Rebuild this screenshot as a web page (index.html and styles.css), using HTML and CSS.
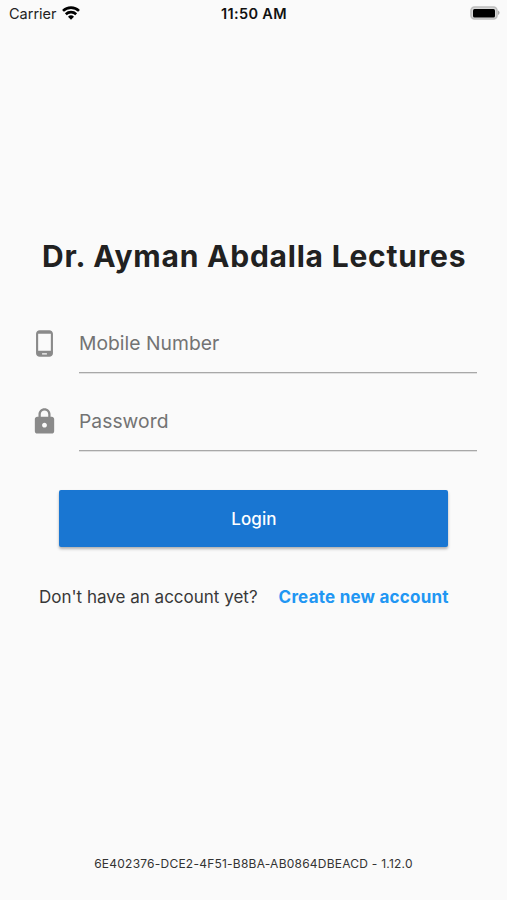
FILE: index.html
```html
<!DOCTYPE html>
<html lang="en">
<head>
<meta charset="utf-8">
<title>Dr. Ayman Abdalla Lectures</title>
<link rel="stylesheet" href="styles.css">
</head>
<body>
<header class="status">
  <div class="carrier"><span class="carrier-name">Carrier</span>
    <svg class="wifi" viewBox="0 0 18 14" width="18" height="14"><g fill="none" stroke="#000" stroke-width="2.6"><path d="M1 4.900a11.400 11.400 0 0 1 16 0"/><path d="M3.800 8.200a7.500 7.500 0 0 1 10.400 0"/></g><path d="M9 13.800 6 10.700a4.300 4.300 0 0 1 6 0z"/></svg>
  </div>
  <time class="clock">11:50 AM</time>
  <svg class="battery" viewBox="0 0 30 14" width="30" height="14"><rect x="1" y="1" width="26" height="12" rx="3.500" fill="#d8d8d8" stroke="#bdbdbd" stroke-width="1.600"/><rect x="3" y="3" width="22" height="8.500" rx="1.500"/><path d="M28 4.500q1.600.8 1.600 2.300T28 9z" fill="#aaa"/></svg>
</header>
<main class="login">
  <h1 class="title">Dr. Ayman Abdalla Lectures</h1>
  <form class="form">
    <label class="field"><svg class="icon" viewBox="0 0 24 24"><path d="M16 1H8C6.340 1 5 2.340 5 4v16c0 1.660 1.340 3 3 3h8c1.660 0 3-1.340 3-3V4c0-1.660-1.340-3-3-3zm-2 20h-4v-1h4v1zm3.250-3H6.750V4h10.500v14z"/></svg><span class="input"><span class="mobile">Mobile Number</span></span></label>
    <label class="field"><svg class="icon" viewBox="0 0 24 24"><path d="M18 8h-1V6c0-2.760-2.240-5-5-5S7 3.240 7 6v2H6c-1.100 0-2 .9-2 2v10c0 1.100.9 2 2 2h12c1.100 0 2-.9 2-2V10c0-1.100-.9-2-2-2zm-6 9c-1.100 0-2-.9-2-2s.9-2 2-2 2 .9 2 2-.9 2-2 2zm3.100-9H8.900V6c0-1.710 1.390-3.100 3.100-3.100s3.100 1.390 3.100 3.100v2z"/></svg><span class="input"><span class="password">Password</span></span></label>
    <button class="submit" type="button">Login</button>
  </form>
  <p class="signup"><span class="question">Don't have an account yet?</span><a class="create">Create new account</a></p>
</main>
<footer class="version"><span class="build">6E402376-DCE2-4F51-B8BA-AB0864DBEACD - 1.12.0</span></footer>
</body>
</html>
```
FILE: styles.css
```css
* { box-sizing: border-box; }
body { margin: 0; height: 900px; display: flex; flex-direction: column; background: #fafafa; color: #212121; font-family: Inter, sans-serif; overflow: hidden; white-space: nowrap; }
.status { height: 26px; padding: 0 7px 0 9px; display: grid; grid-template-columns: 1fr auto 1fr; align-items: center; color: #000; }
.carrier { display: flex; align-items: center; gap: 5px; font-size: 14.500px; color: #222; }
.clock { margin-right: 1px; font-size: 14.500px; font-weight: 600; letter-spacing: .35px; color: #111; }
.battery { justify-self: end; }
.login { padding: 210px 30px 0; }
.title { margin: 0 0 0 12px; height: 40px; font-size: 30px; line-height: 40px; font-weight: 650; letter-spacing: .78px; }
.form { display: flex; flex-direction: column; gap: 20px; margin-top: 39px; }
.field { display: flex; height: 58px; }
.icon { width: 29px; height: 29px; margin: 13.500px 20px 0 0; fill: #8a8a8a; }
.input { flex: 1; height: 58px; padding-top: 13px; border-bottom: 1px solid #a8a8a8; box-shadow: 0 1px 0 #e0e0e0; font-size: 19.300px; line-height: 30px; letter-spacing: .03px; color: #737373; }
.submit { width: 389px; height: 57px; margin: 19px 0 0 29.400px; border: 0; border-radius: 2px; background: #1976d2; color: #fff; font: 500 17px Inter, sans-serif; letter-spacing: .1px; box-shadow: 0 2px 3px rgba(0,0,0,.3); }
.signup { margin: 38px 0 0 9px; display: flex; gap: 21px; font-size: 17px; line-height: 24px; color: #383838; }
.create { color: #2196f3; font-weight: 700; letter-spacing: .23px; }
.version { margin: auto 0 26px; text-align: center; font-size: 12px; line-height: 20px; letter-spacing: .23px; color: #333; }
```
